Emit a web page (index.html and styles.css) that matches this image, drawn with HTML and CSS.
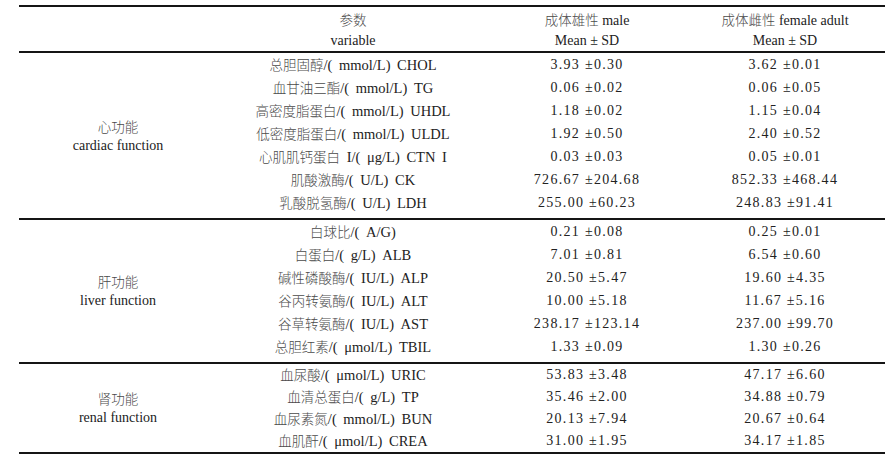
FILE: index.html
```html
<!DOCTYPE html>
<html lang="zh">
<head>
<meta charset="utf-8">
<title>参数表</title>
<link rel="stylesheet" href="styles.css">
</head>
<body>
<table class="data">
  <colgroup><col class="c1"><col class="c2"><col class="c3"><col class="c4"></colgroup>
  <thead>
    <tr>
      <th></th>
      <th><span class="zh">参数</span><br>variable</th>
      <th><span class="zh">成体雄性</span> male<br>Mean ± SD</th>
      <th><span class="zh">成体雌性</span> female adult<br>Mean ± SD</th>
    </tr>
  </thead>
  <tbody class="sec pad">
    <tr><td rowspan="7" class="cat"><span class="zh">心功能</span><br>cardiac function</td><td class="par"><span class="zh">总胆固醇</span>/( mmol/L) CHOL</td><td class="num">3.93 ±0.30</td><td class="num">3.62 ±0.01</td></tr>
    <tr><td class="par"><span class="zh">血甘油三酯</span>/( mmol/L) TG</td><td class="num">0.06 ±0.02</td><td class="num">0.06 ±0.05</td></tr>
    <tr><td class="par"><span class="zh">高密度脂蛋白</span>/( mmol/L) UHDL</td><td class="num">1.18 ±0.02</td><td class="num">1.15 ±0.04</td></tr>
    <tr><td class="par"><span class="zh">低密度脂蛋白</span>/( mmol/L) ULDL</td><td class="num">1.92 ±0.50</td><td class="num">2.40 ±0.52</td></tr>
    <tr><td class="par"><span class="zh">心肌肌钙蛋白</span> I/( μg/L) CTN I</td><td class="num">0.03 ±0.03</td><td class="num">0.05 ±0.01</td></tr>
    <tr><td class="par"><span class="zh">肌酸激酶</span>/( U/L) CK</td><td class="num">726.67 ±204.68</td><td class="num">852.33 ±468.44</td></tr>
    <tr><td class="par"><span class="zh">乳酸脱氢酶</span>/( U/L) LDH</td><td class="num">255.00 ±60.23</td><td class="num">248.83 ±91.41</td></tr>
  </tbody>
  <tbody class="sec pad">
    <tr><td rowspan="6" class="cat"><span class="zh">肝功能</span><br>liver function</td><td class="par"><span class="zh">白球比</span>/( A/G)</td><td class="num">0.21 ±0.08</td><td class="num">0.25 ±0.01</td></tr>
    <tr><td class="par"><span class="zh">白蛋白</span>/( g/L) ALB</td><td class="num">7.01 ±0.81</td><td class="num">6.54 ±0.60</td></tr>
    <tr><td class="par"><span class="zh">碱性磷酸酶</span>/( IU/L) ALP</td><td class="num">20.50 ±5.47</td><td class="num">19.60 ±4.35</td></tr>
    <tr><td class="par"><span class="zh">谷丙转氨酶</span>/( IU/L) ALT</td><td class="num">10.00 ±5.18</td><td class="num">11.67 ±5.16</td></tr>
    <tr><td class="par"><span class="zh">谷草转氨酶</span>/( IU/L) AST</td><td class="num">238.17 ±123.14</td><td class="num">237.00 ±99.70</td></tr>
    <tr><td class="par"><span class="zh">总胆红素</span>/( μmol/L) TBIL</td><td class="num">1.33 ±0.09</td><td class="num">1.30 ±0.26</td></tr>
  </tbody>
  <tbody class="sec renal">
    <tr><td rowspan="4" class="cat"><span class="zh">肾功能</span><br>renal function</td><td class="par"><span class="zh">血尿酸</span>/( μmol/L) URIC</td><td class="num">53.83 ±3.48</td><td class="num">47.17 ±6.60</td></tr>
    <tr><td class="par"><span class="zh">血清总蛋白</span>/( g/L) TP</td><td class="num">35.46 ±2.00</td><td class="num">34.88 ±0.79</td></tr>
    <tr><td class="par"><span class="zh">血尿素氮</span>/( mmol/L) BUN</td><td class="num">20.13 ±7.94</td><td class="num">20.67 ±0.64</td></tr>
    <tr><td class="par"><span class="zh">血肌酐</span>/( μmol/L) CREA</td><td class="num">31.00 ±1.95</td><td class="num">34.17 ±1.85</td></tr>
  </tbody>
</table>
</body>
</html>
```

FILE: styles.css
```css
body {
  margin: 0;
  background: #ffffff;
}

.data {
  border-collapse: collapse;
  table-layout: fixed;
  width: 866px;
  margin: 5px 0 0 19px;
  font-family: "Liberation Serif", "Noto Sans CJK SC", serif;
  font-size: 14px;
  color: #222222;
}

.c1 { width: 198px; }
.c2 { width: 272px; }
.c3 { width: 196px; }
.c4 { width: 200px; }

.data thead tr {
  border-top: 2px solid #151515;
  border-bottom: 2px solid #151515;
}

.data th {
  font-weight: normal;
  text-align: center;
  line-height: 20px;
  height: 40px;
  padding: 4px 0 0 0;
}

.data td {
  text-align: center;
  vertical-align: middle;
  padding: 0;
  height: 23px;
  line-height: 16px;
  white-space: nowrap;
}

.data td.par {
  font-size: 14.5px;
  word-spacing: 3px;
}

.sec {
  border-bottom: 2px solid #151515;
}

.pad tr:last-child td {
  height: 28px;
  vertical-align: top;
  padding-top: 4px;
  box-sizing: border-box;
}

.renal td {
  height: 22px;
}

.data td.cat {
  vertical-align: middle;
  line-height: 18px;
  height: auto;
  padding: 2px 0 0 0;
}

.zh {
  font-family: "Noto Sans CJK SC", sans-serif;
  font-size: 13.5px;
  line-height: 1;
  font-weight: 300;
  color: #4a4a4a;
  word-spacing: 0;
}

.num {
  letter-spacing: 1.3px;
}
```
